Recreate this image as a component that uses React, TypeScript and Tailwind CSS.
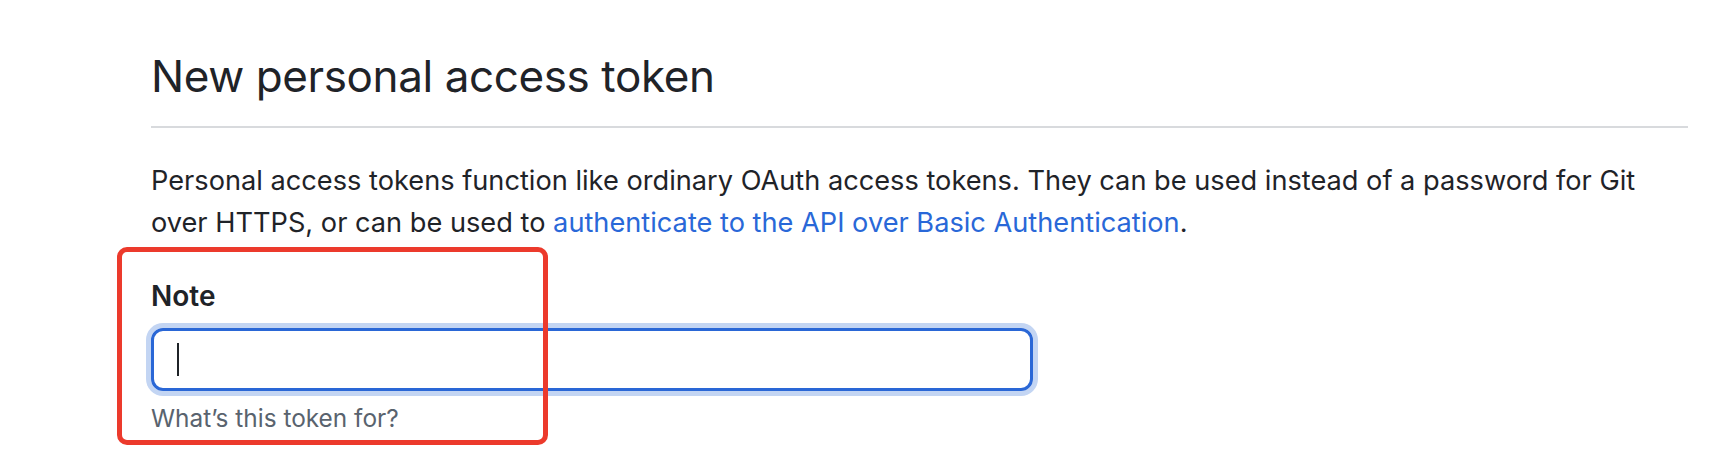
import React from "react";

export default function App() {
  return (
    <div
      className="relative h-[450px] w-[1716px] overflow-hidden bg-white text-[#1f2328]"
      style={{ fontFamily: "Inter, 'Liberation Sans', sans-serif" }}
    >
      <div className="pl-[151px] pr-[28px]">
        <div className="border-b-2 border-[#d8dadd] pt-[48px] pb-[22px]">
          <h1 className="text-[44px] font-normal leading-[56px] tracking-[-0.4px]">
            New personal access token
          </h1>
        </div>

        <p className="mt-[32px] text-[27.2px] leading-[42px]">
          Personal access tokens function like ordinary OAuth access tokens. They can be used instead of a password for Git
          <br />
          over HTTPS, or can be used to{" "}
          <a href="#" className="text-[#2968d8]">
            authenticate to the API over Basic Authentication
          </a>
          .
        </p>

        <div className="mt-[34px] text-[28px] font-semibold leading-[36px]">Note</div>

        <div className="mt-[14px] flex h-[63px] w-[882px] items-center rounded-[12px] border-[3px] border-[#2a67d6] pl-[23px] shadow-[0_0_0_5px_#c3d5f3]">
          <div className="h-[33px] w-[2px] bg-[#1f2328]" />
        </div>

        <div className="mt-[12px] text-[24.4px] leading-[31px] text-[#59636e]">
          What’s this token for?
        </div>
      </div>

      <div className="pointer-events-none absolute left-[117px] top-[247px] h-[198px] w-[431px] rounded-[10px] border-[5px] border-[#ec3a2c]" />
    </div>
  );
}
